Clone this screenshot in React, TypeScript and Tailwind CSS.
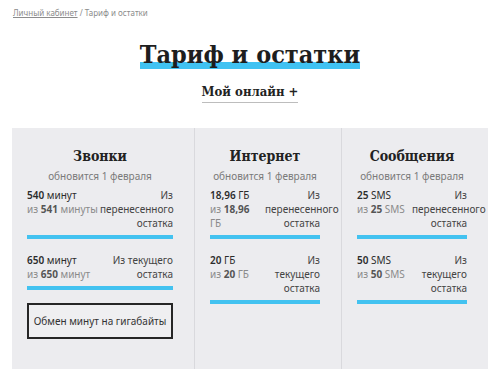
type Row = {
  amount: string;
  unit: string;
  total: string;
  totalUnit: string;
  note: string;
};

type Section = {
  title: string;
  rows: Row[];
  action?: string;
};

const sections: Section[] = [
  {
    title: "Звонки",
    rows: [
      { amount: "540", unit: "минут", total: "541", totalUnit: "минуты", note: "Из перенесенного остатка" },
      { amount: "650", unit: "минут", total: "650", totalUnit: "минут", note: "Из текущего остатка" },
    ],
    action: "Обмен минут на гигабайты",
  },
  {
    title: "Интернет",
    rows: [
      { amount: "18,96", unit: "ГБ", total: "18,96", totalUnit: "ГБ", note: "Из перенесенного остатка" },
      { amount: "20", unit: "ГБ", total: "20", totalUnit: "ГБ", note: "Из текущего остатка" },
    ],
  },
  {
    title: "Сообщения",
    rows: [
      { amount: "25", unit: "SMS", total: "25", totalUnit: "SMS", note: "Из перенесенного остатка" },
      { amount: "50", unit: "SMS", total: "50", totalUnit: "SMS", note: "Из текущего остатка" },
    ],
  },
];

function Balance({ row }: { row: Row }) {
  return (
    <div className="mt-[14px] first:mt-0">
      <div className="flex text-[10px] leading-[14px]">
        <div className="w-1/2 pr-[2px] text-left">
          <div className="text-[#2b2b2b]">
            <b className="font-semibold">{row.amount}</b> {row.unit}
          </div>
          <div className="text-[#8a8a8a]">
            из <b className="font-bold text-[#555]">{row.total}</b> {row.totalUnit}
          </div>
        </div>
        <div className="w-1/2 text-right text-[#444]">{row.note}</div>
      </div>
      <div className="mt-[5px] h-[4px] bg-[#43c2f0]" />
    </div>
  );
}

export default function App() {
  return (
    <div className="min-h-[369px] bg-white font-['Noto_Sans',sans-serif]">
      <div className="px-[13px] pt-[7px] text-[8px] leading-[12px] text-[#8c8c8c]">
        <a className="underline">Личный кабинет</a> / Тариф и остатки
      </div>

      <div className="mt-[22px] flex flex-col items-center">
        <h1 className="font-['DejaVu_Serif',serif] text-[25px] font-bold leading-[28px] text-[#1e1e1e] [font-stretch:condensed] shadow-[inset_0_-7px_0_#40c2f2]">
          Тариф и остатки
        </h1>
        <div className="mt-[15px] border-b border-[#bdbdbd] pb-[2px] font-['DejaVu_Serif',serif] text-[13px] font-bold leading-[16px] text-[#222] [font-stretch:condensed]">
          Мой онлайн +
        </div>
      </div>

      <div className="mx-[12px] mt-[25px] grid min-h-[241px] grid-cols-[182px_147px_147px] bg-[#ececef]">
        {sections.map((s, i) => (
          <div
            key={s.title}
            className={
              "pl-[15px] pr-[21px] pt-[19px] " + (i > 0 ? "border-l border-[#d9d9dd]" : "")
            }
          >
            <div className="text-center font-['DejaVu_Serif',serif] text-[14px] font-bold leading-[18px] text-[#222] [font-stretch:condensed]">
              {s.title}
            </div>
            <div className="mt-[4px] text-center text-[10px] leading-[14px] text-[#7a7a7a]">
              обновится 1 февраля
            </div>
            <div className="mt-[5px]">
              {s.rows.map((r) => (
                <Balance key={r.note} row={r} />
              ))}
            </div>
            {s.action && (
              <button className="mt-[13px] h-[36px] w-full border-2 border-[#262626] bg-[#efeff1] text-[10px] text-[#333]">
                {s.action}
              </button>
            )}
          </div>
        ))}
      </div>
    </div>
  );
}
